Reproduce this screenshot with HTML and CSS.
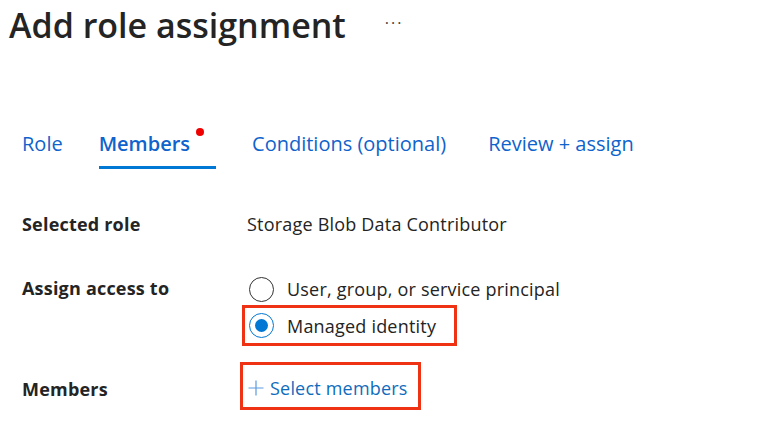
FILE: index.html
```html
<!DOCTYPE html>
<html lang="en">
<head>
<meta charset="utf-8">
<title>Add role assignment</title>
<link rel="stylesheet" href="styles.css">
</head>
<body>
<header class="header">
  <h1 class="title">Add role assignment</h1>
  <span class="more">···</span>
</header>

<nav class="tabs">
  <a class="tab">Role</a>
  <a class="tab active">Members<span class="dot"></span></a>
  <a class="tab">Conditions (optional)</a>
  <a class="tab">Review + assign</a>
</nav>

<section class="form">
  <div class="row row-role">
    <div class="label">Selected role</div>
    <div class="value">Storage Blob Data Contributor</div>
  </div>
  <div class="row row-access">
    <div class="label">Assign access to</div>
    <div class="options">
      <label class="option"><span class="radio"></span>User, group, or service principal</label>
      <label class="option highlight"><span class="radio checked"></span>Managed identity</label>
    </div>
  </div>
  <div class="row row-members">
    <div class="label">Members</div>
    <div class="value">
      <a class="select highlight">
        <svg class="plus" width="16" height="16" viewBox="0 0 16 16"><path d="M8 0.5V15.5M0.5 8H15.5" stroke="#5a9be0" stroke-width="1.2" fill="none"/></svg>
        Select members
      </a>
    </div>
  </div>
</section>
</body>
</html>
```

FILE: styles.css
```css
* { box-sizing: border-box; }
html, body { margin: 0; padding: 0; background: #ffffff; }
body {
  font-family: "Open Sans", "Noto Sans", sans-serif;
  color: #242424;
  width: 757px;
  height: 439px;
  overflow: hidden;
}
.header {
  display: flex;
  align-items: center;
  padding: 2px 0 0 9px;
  height: 48px;
}
.title {
  margin: 0;
  font-size: 34px;
  font-weight: 600;
  line-height: 44px;
  color: #242424;
}
.more {
  margin-left: 39px;
  font-size: 16px;
  color: #444;
  letter-spacing: 2px;
  margin-top: -4px;
}
.tabs {
  display: flex;
  gap: 36px;
  padding: 83px 0 0 22px;
}
.tab {
  position: relative;
  font-size: 20px;
  line-height: 26px;
  color: #0e63cc;
  padding-bottom: 9px;
  border-bottom: 3px solid transparent;
}
.tab.active {
  font-weight: 600;
  border-bottom-color: #0078d4;
  padding-right: 26px;
}
.tab:last-child { margin-left: 6px; }
.dot {
  position: absolute;
  width: 8px;
  height: 8px;
  border-radius: 50%;
  background: #f00000;
  right: 12px;
  top: -3px;
}
.form {
  padding: 43px 0 0 22px;
}
.row {
  display: grid;
  grid-template-columns: 225px 1fr;
  align-items: start;
  font-size: 18px;
  line-height: 24px;
  letter-spacing: 0.2px;
}
.label {
  font-weight: 700;
  color: #242424;
}
.value { color: #242424; }
.row-access { margin-top: 40px; }
.options {
  display: flex;
  flex-direction: column;
  gap: 6px;
}
.option {
  display: flex;
  align-items: center;
  gap: 13px;
  height: 26px;
}
.radio {
  flex: none;
  width: 25px;
  height: 25px;
  border-radius: 50%;
  border: 1px solid #333;
  margin-left: 2px;
  display: flex;
  align-items: center;
  justify-content: center;
}
.radio.checked { border-color: #0078d4; }
.radio.checked::after {
  content: "";
  width: 13px;
  height: 13px;
  border-radius: 50%;
  background: #0078d4;
}
.highlight { outline: 3px solid #f03214; outline-offset: 0; }
.option.highlight {
  margin-left: -2px;
  padding-left: 2px;
  height: 35px;
  width: 209px;
}
.row-members { margin-top: 22px; }
.row-members .label { margin-top: 12px; }
.select {
  display: inline-flex;
  align-items: center;
  gap: 6px;
  color: #0f6cbd;
  height: 42px;
  width: 175px;
  padding: 3px 0 0 5px;
  margin-left: -4px;
}
```
